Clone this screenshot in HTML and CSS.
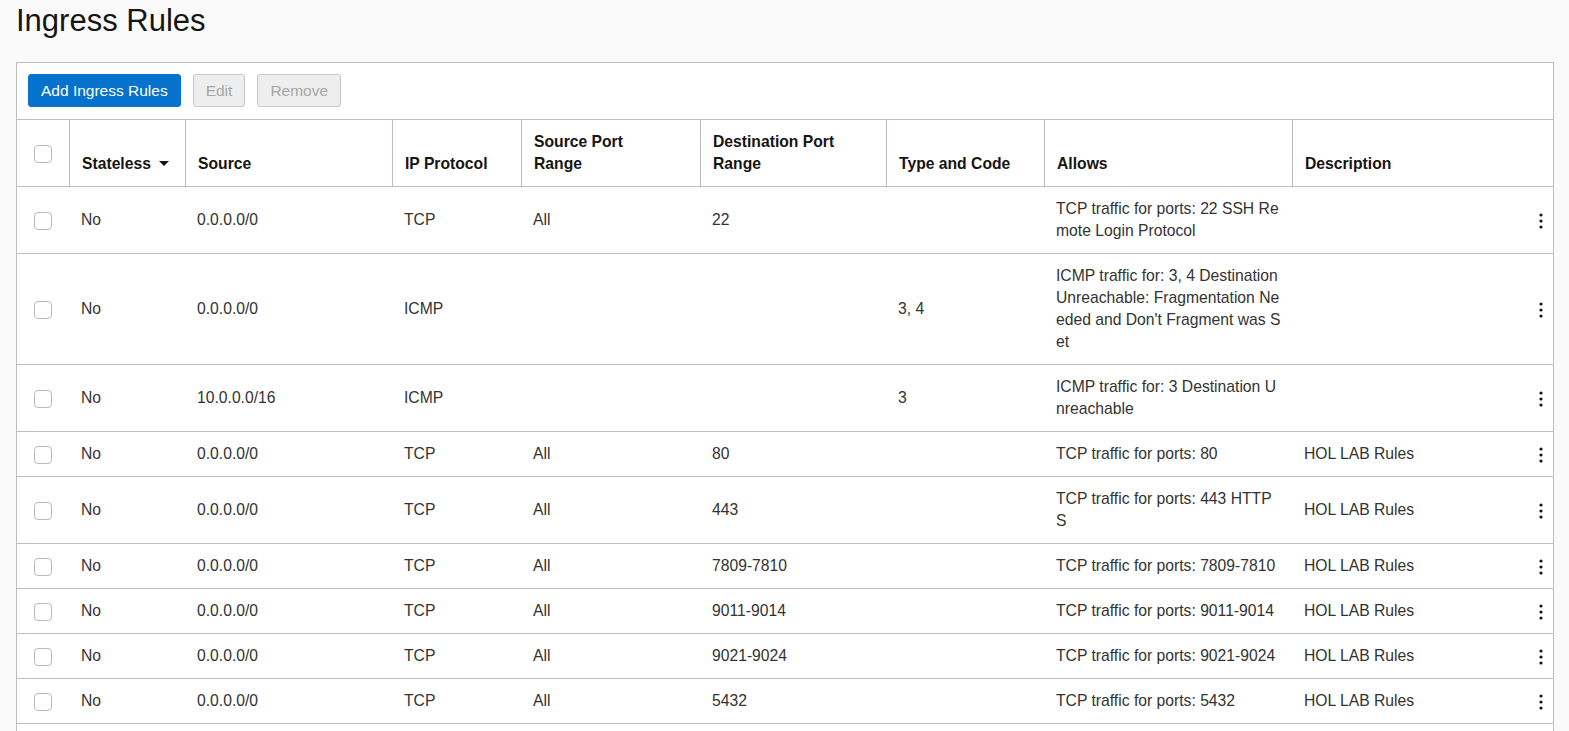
FILE: index.html
```html
<!DOCTYPE html>
<html lang="en">
<head>
<meta charset="utf-8">
<title>Ingress Rules</title>
<link rel="stylesheet" href="styles.css">
</head>
<body>
<h1 class="page-title">Ingress Rules</h1>
<div class="panel">
  <div class="toolbar">
    <button class="btn btn-primary">Add Ingress Rules</button>
    <button class="btn btn-disabled" disabled>Edit</button>
    <button class="btn btn-disabled" disabled>Remove</button>
  </div>
  <table class="rules">
    <colgroup>
      <col class="c-check"><col class="c-stateless"><col class="c-source"><col class="c-proto"><col class="c-sport"><col class="c-dport"><col class="c-type"><col class="c-allows"><col class="c-desc"><col class="c-act">
    </colgroup>
    <thead>
      <tr>
        <th class="cell-check"><span class="checkbox"></span></th>
        <th>Stateless<span class="caret"></span></th>
        <th>Source</th>
        <th>IP Protocol</th>
        <th>Source Port<br>Range</th>
        <th>Destination Port<br>Range</th>
        <th>Type and Code</th>
        <th>Allows</th>
        <th>Description</th>
        <th class="th-act"></th>
      </tr>
    </thead>
    <tbody>
      <tr>
        <td class="cell-check"><span class="checkbox"></span></td>
        <td>No</td><td>0.0.0.0/0</td><td>TCP</td><td>All</td><td>22</td><td></td>
        <td class="allows">TCP traffic for ports: 22 SSH Remote Login Protocol</td><td></td>
        <td class="cell-act"><svg class="kebab" width="4" height="16" viewBox="0 0 4 16"><circle cx="2" cy="2" r="1.6"/><circle cx="2" cy="8" r="1.6"/><circle cx="2" cy="14" r="1.6"/></svg></td>
      </tr>
      <tr>
        <td class="cell-check"><span class="checkbox"></span></td>
        <td>No</td><td>0.0.0.0/0</td><td>ICMP</td><td></td><td></td><td>3, 4</td>
        <td class="allows">ICMP traffic for: 3, 4 Destination Unreachable: Fragmentation Needed and Don't Fragment was Set</td><td></td>
        <td class="cell-act"><svg class="kebab" width="4" height="16" viewBox="0 0 4 16"><circle cx="2" cy="2" r="1.6"/><circle cx="2" cy="8" r="1.6"/><circle cx="2" cy="14" r="1.6"/></svg></td>
      </tr>
      <tr>
        <td class="cell-check"><span class="checkbox"></span></td>
        <td>No</td><td>10.0.0.0/16</td><td>ICMP</td><td></td><td></td><td>3</td>
        <td class="allows">ICMP traffic for: 3 Destination Unreachable</td><td></td>
        <td class="cell-act"><svg class="kebab" width="4" height="16" viewBox="0 0 4 16"><circle cx="2" cy="2" r="1.6"/><circle cx="2" cy="8" r="1.6"/><circle cx="2" cy="14" r="1.6"/></svg></td>
      </tr>
      <tr>
        <td class="cell-check"><span class="checkbox"></span></td>
        <td>No</td><td>0.0.0.0/0</td><td>TCP</td><td>All</td><td>80</td><td></td>
        <td class="allows">TCP traffic for ports: 80</td><td>HOL LAB Rules</td>
        <td class="cell-act"><svg class="kebab" width="4" height="16" viewBox="0 0 4 16"><circle cx="2" cy="2" r="1.6"/><circle cx="2" cy="8" r="1.6"/><circle cx="2" cy="14" r="1.6"/></svg></td>
      </tr>
      <tr>
        <td class="cell-check"><span class="checkbox"></span></td>
        <td>No</td><td>0.0.0.0/0</td><td>TCP</td><td>All</td><td>443</td><td></td>
        <td class="allows">TCP traffic for ports: 443 HTTPS</td><td>HOL LAB Rules</td>
        <td class="cell-act"><svg class="kebab" width="4" height="16" viewBox="0 0 4 16"><circle cx="2" cy="2" r="1.6"/><circle cx="2" cy="8" r="1.6"/><circle cx="2" cy="14" r="1.6"/></svg></td>
      </tr>
      <tr>
        <td class="cell-check"><span class="checkbox"></span></td>
        <td>No</td><td>0.0.0.0/0</td><td>TCP</td><td>All</td><td>7809-7810</td><td></td>
        <td class="allows">TCP traffic for ports: 7809-7810</td><td>HOL LAB Rules</td>
        <td class="cell-act"><svg class="kebab" width="4" height="16" viewBox="0 0 4 16"><circle cx="2" cy="2" r="1.6"/><circle cx="2" cy="8" r="1.6"/><circle cx="2" cy="14" r="1.6"/></svg></td>
      </tr>
      <tr>
        <td class="cell-check"><span class="checkbox"></span></td>
        <td>No</td><td>0.0.0.0/0</td><td>TCP</td><td>All</td><td>9011-9014</td><td></td>
        <td class="allows">TCP traffic for ports: 9011-9014</td><td>HOL LAB Rules</td>
        <td class="cell-act"><svg class="kebab" width="4" height="16" viewBox="0 0 4 16"><circle cx="2" cy="2" r="1.6"/><circle cx="2" cy="8" r="1.6"/><circle cx="2" cy="14" r="1.6"/></svg></td>
      </tr>
      <tr>
        <td class="cell-check"><span class="checkbox"></span></td>
        <td>No</td><td>0.0.0.0/0</td><td>TCP</td><td>All</td><td>9021-9024</td><td></td>
        <td class="allows">TCP traffic for ports: 9021-9024</td><td>HOL LAB Rules</td>
        <td class="cell-act"><svg class="kebab" width="4" height="16" viewBox="0 0 4 16"><circle cx="2" cy="2" r="1.6"/><circle cx="2" cy="8" r="1.6"/><circle cx="2" cy="14" r="1.6"/></svg></td>
      </tr>
      <tr>
        <td class="cell-check"><span class="checkbox"></span></td>
        <td>No</td><td>0.0.0.0/0</td><td>TCP</td><td>All</td><td>5432</td><td></td>
        <td class="allows">TCP traffic for ports: 5432</td><td>HOL LAB Rules</td>
        <td class="cell-act"><svg class="kebab" width="4" height="16" viewBox="0 0 4 16"><circle cx="2" cy="2" r="1.6"/><circle cx="2" cy="8" r="1.6"/><circle cx="2" cy="14" r="1.6"/></svg></td>
      </tr>
    </tbody>
  </table>
</div>
</body>
</html>
```
FILE: styles.css
```css
* { box-sizing: border-box; }

html, body {
  margin: 0;
  background: #fafafa;
}

body {
  padding: 0 15px 0 16px;
  font-family: "Liberation Sans", Arial, sans-serif;
  font-size: 15.7px;
  color: #333333;
}

.page-title {
  margin: 2px 0 23px;
  font-size: 31px;
  line-height: 37px;
  font-weight: normal;
  color: #161513;
}

.panel {
  background: #ffffff;
  border: 1px solid #babdc3;
  padding-bottom: 40px;
}

.toolbar {
  display: flex;
  gap: 12px;
  padding: 11px 11px 12px;
  border-bottom: 1px solid #babdc3;
}

.btn {
  height: 33px;
  padding: 0 12px;
  border-radius: 3px;
  font-family: inherit;
  font-size: 15.5px;
  line-height: 31px;
  border: 1px solid transparent;
}

.btn-primary {
  background: #0572ce;
  border-color: #0572ce;
  color: #ffffff;
}

.btn-disabled {
  background: #eeeeee;
  border-color: #c9c9c9;
  color: #a6a6a6;
}

.rules {
  width: 100%;
  table-layout: fixed;
  border-collapse: separate;
  border-spacing: 0;
}

.c-check { width: 52px; }
.c-stateless { width: 116px; }
.c-source { width: 207px; }
.c-proto { width: 129px; }
.c-sport { width: 179px; }
.c-dport { width: 186px; }
.c-type { width: 158px; }
.c-allows { width: 248px; }
.c-desc { width: 237px; }
.c-act { width: 24px; }

.rules th,
.rules td {
  padding: 11px 12px;
  line-height: 22px;
  text-align: left;
  border-bottom: 1px solid #babdc3;
}

.rules th {
  vertical-align: bottom;
  font-weight: bold;
  color: #161513;
  border-left: 1px solid #babdc3;
}

.rules th:first-child { border-left: none; }
.rules th.th-act { border-left: none; }

.rules td {
  vertical-align: middle;
}

.rules .cell-check {
  text-align: center;
  vertical-align: middle;
  padding: 0;
}

.checkbox {
  display: inline-block;
  width: 18px;
  height: 18px;
  border: 1px solid #b9b9b9;
  border-radius: 4px;
  background: #ffffff;
  vertical-align: middle;
}

.caret {
  display: inline-block;
  margin-left: 8px;
  width: 0;
  height: 0;
  border-left: 5px solid transparent;
  border-right: 5px solid transparent;
  border-top: 5px solid #161513;
  vertical-align: middle;
  position: relative;
  top: -1px;
}

.rules .allows {
  padding-right: 10px;
  word-break: break-all;
}

.rules .cell-act {
  padding: 0;
  text-align: center;
}

.kebab {
  display: inline-block;
  vertical-align: middle;
  fill: #161513;
}
```
